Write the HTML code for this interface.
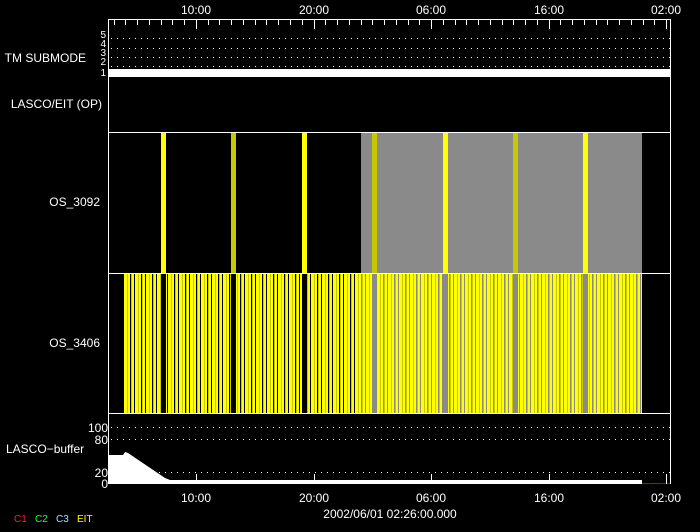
<!DOCTYPE html>
<html><head><style>
html,body{margin:0;padding:0;background:#000;}
svg{display:block}
text{font-family:"Liberation Sans",sans-serif;font-size:12px;fill:#fff}
</style></head><body>
<svg width="700" height="532" viewBox="0 0 700 532" xmlns="http://www.w3.org/2000/svg">
<defs>
<pattern id="st" x="124" y="0" width="11" height="10" patternUnits="userSpaceOnUse">
<rect x="0" y="0" width="3" height="10" fill="#ffff00"/>
<rect x="3" y="0" width="1" height="10" fill="#c8c800"/>
<rect x="4" y="0" width="2" height="10" fill="#ffff00"/>
<rect x="7" y="0" width="1" height="10" fill="#c8c800"/>
<rect x="8" y="0" width="2" height="10" fill="#ffff00"/>
</pattern>
<pattern id="dt" x="0" y="0" width="6" height="1" patternUnits="userSpaceOnUse">
<rect x="3" y="0" width="1" height="1" fill="#fff"/>
</pattern>
</defs>
<text x="196" y="14" text-anchor="middle">10:00</text>
<text x="314" y="14" text-anchor="middle">20:00</text>
<text x="431" y="14" text-anchor="middle">06:00</text>
<text x="549" y="14" text-anchor="middle">16:00</text>
<text x="666" y="14" text-anchor="middle">02:00</text>
<rect x="108.5" y="19.5" width="562" height="464" fill="none" stroke="#fff" stroke-width="1"/>
<g stroke="#fff" stroke-width="1">
<line x1="108" y1="132.5" x2="671" y2="132.5"/>
<line x1="108" y1="273.5" x2="671" y2="273.5"/>
<line x1="108" y1="413.5" x2="671" y2="413.5"/>
</g>
<g stroke="#fff" stroke-width="1">
<line x1="114.5" y1="19" x2="114.5" y2="25"/><line x1="125.5" y1="19" x2="125.5" y2="25"/><line x1="137.5" y1="19" x2="137.5" y2="25"/><line x1="149.5" y1="19" x2="149.5" y2="25"/><line x1="161.5" y1="19" x2="161.5" y2="25"/><line x1="172.5" y1="19" x2="172.5" y2="25"/><line x1="184.5" y1="19" x2="184.5" y2="25"/><line x1="196.5" y1="19" x2="196.5" y2="29"/>
<line x1="208.5" y1="19" x2="208.5" y2="25"/><line x1="219.5" y1="19" x2="219.5" y2="25"/><line x1="231.5" y1="19" x2="231.5" y2="25"/><line x1="243.5" y1="19" x2="243.5" y2="25"/><line x1="255.5" y1="19" x2="255.5" y2="25"/><line x1="266.5" y1="19" x2="266.5" y2="25"/><line x1="278.5" y1="19" x2="278.5" y2="25"/><line x1="290.5" y1="19" x2="290.5" y2="25"/><line x1="302.5" y1="19" x2="302.5" y2="25"/><line x1="314.5" y1="19" x2="314.5" y2="29"/>
<line x1="325.5" y1="19" x2="325.5" y2="25"/><line x1="337.5" y1="19" x2="337.5" y2="25"/><line x1="349.5" y1="19" x2="349.5" y2="25"/><line x1="361.5" y1="19" x2="361.5" y2="25"/><line x1="372.5" y1="19" x2="372.5" y2="25"/><line x1="384.5" y1="19" x2="384.5" y2="25"/><line x1="396.5" y1="19" x2="396.5" y2="25"/><line x1="408.5" y1="19" x2="408.5" y2="25"/><line x1="419.5" y1="19" x2="419.5" y2="25"/><line x1="431.5" y1="19" x2="431.5" y2="29"/>
<line x1="443.5" y1="19" x2="443.5" y2="25"/><line x1="455.5" y1="19" x2="455.5" y2="25"/><line x1="466.5" y1="19" x2="466.5" y2="25"/><line x1="478.5" y1="19" x2="478.5" y2="25"/><line x1="490.5" y1="19" x2="490.5" y2="25"/><line x1="502.5" y1="19" x2="502.5" y2="25"/><line x1="513.5" y1="19" x2="513.5" y2="25"/><line x1="525.5" y1="19" x2="525.5" y2="25"/><line x1="537.5" y1="19" x2="537.5" y2="25"/><line x1="549.5" y1="19" x2="549.5" y2="29"/>
<line x1="560.5" y1="19" x2="560.5" y2="25"/><line x1="572.5" y1="19" x2="572.5" y2="25"/><line x1="584.5" y1="19" x2="584.5" y2="25"/><line x1="596.5" y1="19" x2="596.5" y2="25"/><line x1="607.5" y1="19" x2="607.5" y2="25"/><line x1="619.5" y1="19" x2="619.5" y2="25"/><line x1="631.5" y1="19" x2="631.5" y2="25"/><line x1="643.5" y1="19" x2="643.5" y2="25"/><line x1="654.5" y1="19" x2="654.5" y2="25"/><line x1="666.5" y1="19" x2="666.5" y2="29"/>
</g>
<rect x="109" y="38" width="561" height="1" fill="url(#dt)"/>
<rect x="109" y="48" width="561" height="1" fill="url(#dt)"/>
<rect x="109" y="57" width="561" height="1" fill="url(#dt)"/>
<rect x="109" y="66" width="561" height="1" fill="url(#dt)"/>
<rect x="109" y="69" width="562" height="8" fill="#fff"/>
<text x="86" y="62" text-anchor="end">TM SUBMODE</text>
<text x="106" y="38" text-anchor="end" style="font-size:10px">5</text><text x="106" y="47" text-anchor="end" style="font-size:10px">4</text><text x="106" y="56" text-anchor="end" style="font-size:10px">3</text><text x="106" y="65" text-anchor="end" style="font-size:10px">2</text><text x="106" y="76" text-anchor="end" style="font-size:10px">1</text>
<text x="102" y="108" text-anchor="end">LASCO/EIT (OP)</text>
<text x="100" y="206" text-anchor="end">OS_3092</text>
<rect x="361" y="133" width="281" height="140" fill="#8a8a8a"/>
<rect x="161" y="133" width="5" height="140" fill="#ffff00"/>
<rect x="231" y="133" width="5" height="140" fill="#c8c800"/>
<rect x="302" y="133" width="5" height="140" fill="#ffff00"/>
<rect x="372" y="133" width="5" height="140" fill="#c8c800"/>
<rect x="443" y="133" width="5" height="140" fill="#ffff00"/>
<rect x="513" y="133" width="5" height="140" fill="#c8c800"/>
<rect x="583" y="133" width="5" height="140" fill="#ffff00"/>
<text x="100" y="347" text-anchor="end">OS_3406</text>
<rect x="361" y="274" width="281" height="139" fill="#8a8a8a"/>
<rect x="124" y="274" width="518" height="139" fill="url(#st)"/>
<rect x="161" y="274" width="5" height="139" fill="#000"/>
<rect x="231" y="274" width="5" height="139" fill="#000"/>
<rect x="302" y="274" width="5" height="139" fill="#000"/>
<rect x="372" y="274" width="5" height="139" fill="#8a8a8a"/>
<rect x="443" y="274" width="5" height="139" fill="#8a8a8a"/>
<rect x="513" y="274" width="5" height="139" fill="#8a8a8a"/>
<rect x="583" y="274" width="5" height="139" fill="#8a8a8a"/>
<rect x="109" y="427" width="561" height="1" fill="url(#dt)"/>
<rect x="109" y="439" width="561" height="1" fill="url(#dt)"/>
<rect x="109" y="472" width="561" height="1" fill="url(#dt)"/>
<text x="108" y="432" text-anchor="end">100</text>
<text x="108" y="444" text-anchor="end">80</text>
<text x="108" y="477" text-anchor="end">20</text>
<text x="108" y="488" text-anchor="end">0</text>
<text x="6" y="453">LASCO−buffer</text>
<polygon fill="#fff" points="109,455 123,455 125,452 128,453 165,478 170,480 642,480 642,484 109,484"/>
<line x1="642" y1="483.5" x2="670" y2="483.5" stroke="#c00000"/>
<g stroke="#fff"><line x1="196.5" y1="474" x2="196.5" y2="484"/><line x1="314.5" y1="474" x2="314.5" y2="484"/><line x1="431.5" y1="474" x2="431.5" y2="484"/><line x1="549.5" y1="474" x2="549.5" y2="484"/><line x1="666.5" y1="474" x2="666.5" y2="484"/></g>
<text x="196" y="502" text-anchor="middle">10:00</text>
<text x="314" y="502" text-anchor="middle">20:00</text>
<text x="431" y="502" text-anchor="middle">06:00</text>
<text x="549" y="502" text-anchor="middle">16:00</text>
<text x="666" y="502" text-anchor="middle">02:00</text>
<text x="390" y="518" text-anchor="middle">2002/06/01 02:26:00.000</text>
<text x="14" y="522" style="fill:#ff2020;font-size:10px">C1</text>
<text x="35" y="522" style="fill:#20ff20;font-size:10px">C2</text>
<text x="56" y="522" style="fill:#a0e0ff;font-size:10px">C3</text>
<text x="77" y="522" style="fill:#ffff00;font-size:10px">EIT</text>
</svg>
</body></html>
